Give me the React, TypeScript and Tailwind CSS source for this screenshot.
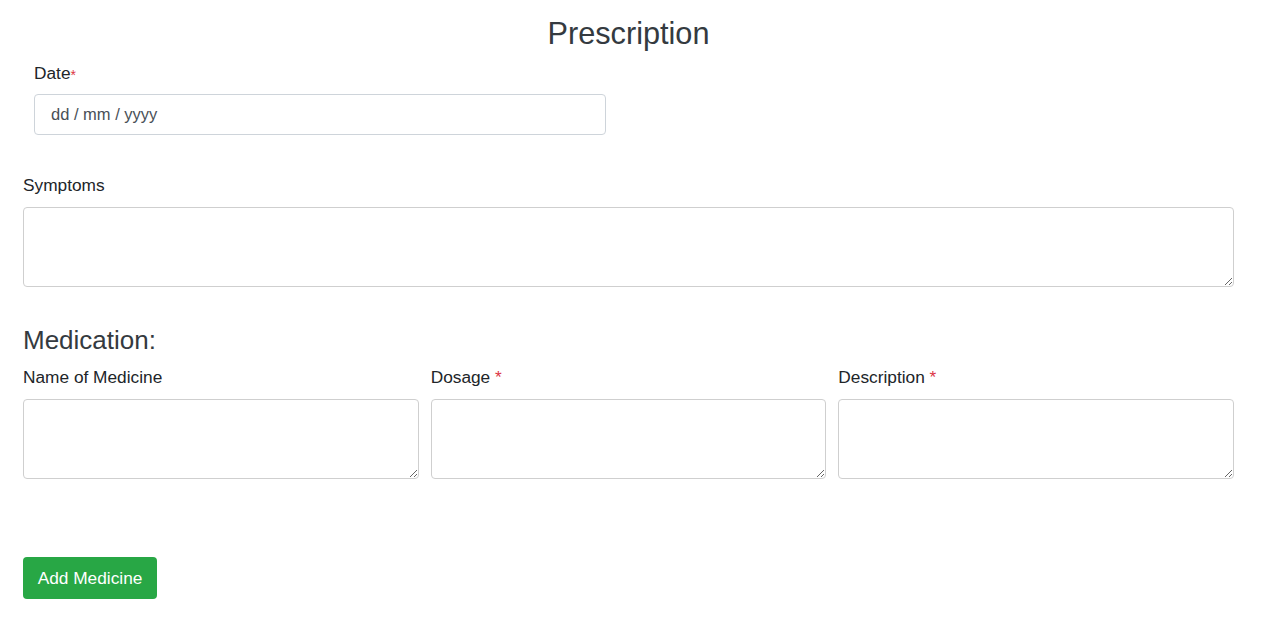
import React from "react";

function Label({ text, star, className = "" }: { text: string; star?: "tight" | "spaced"; className?: string }) {
  return (
    <label className={`block text-[17.3px] leading-[22px] text-[#212529] ${className}`}>
      {text}
      {star === "tight" && <span className="text-[14px] text-[#dc3545] align-[-1px]">*</span>}
      {star === "spaced" && <span className="text-[#dc3545]"> *</span>}
    </label>
  );
}

function Area() {
  return (
    <textarea className="block h-[80px] w-full rounded-[4px] border border-[#cfcfcf] bg-white px-3 py-2 text-[16px] outline-none" />
  );
}

export default function App() {
  return (
    <div className="min-h-[620px] bg-white" style={{ fontFamily: '"Liberation Sans", Arial, sans-serif' }}>
      <form className="ml-[23px] w-[1211px] pt-[16px]" onSubmit={(e) => e.preventDefault()}>
        <h1 className="text-center text-[30.7px] leading-9 text-[#343a40]">Prescription</h1>

        <div className="ml-[11px] mt-[10px] w-[572px]">
          <Label text="Date" star="tight" className="mb-[8px]" />
          <input
            type="text"
            placeholder="dd / mm / yyyy"
            className="block h-[41px] w-full rounded-[4px] border border-[#ced4da] bg-white px-4 text-[16.5px] text-[#495057] outline-none placeholder:text-[#495057]"
          />
        </div>

        <div className="mt-[39px]">
          <Label text="Symptoms" className="mb-[11px]" />
          <Area />
        </div>

        <h2 className="mt-[38px] text-[26px] leading-[31px] text-[#343a40]">Medication:</h2>

        <div className="mt-[10px] grid grid-cols-3 gap-x-[12px]">
          <div>
            <Label text="Name of Medicine" className="mb-[11px]" />
            <Area />
          </div>
          <div>
            <Label text="Dosage" star="spaced" className="mb-[11px]" />
            <Area />
          </div>
          <div>
            <Label text="Description" star="spaced" className="mb-[11px]" />
            <Area />
          </div>
        </div>

        <button
          type="button"
          className="mt-[78px] flex h-[42px] w-[134px] items-center justify-center rounded-[4px] bg-[#28a745] pt-px text-[17.3px] text-white"
        >
          Add Medicine
        </button>
      </form>
    </div>
  );
}
